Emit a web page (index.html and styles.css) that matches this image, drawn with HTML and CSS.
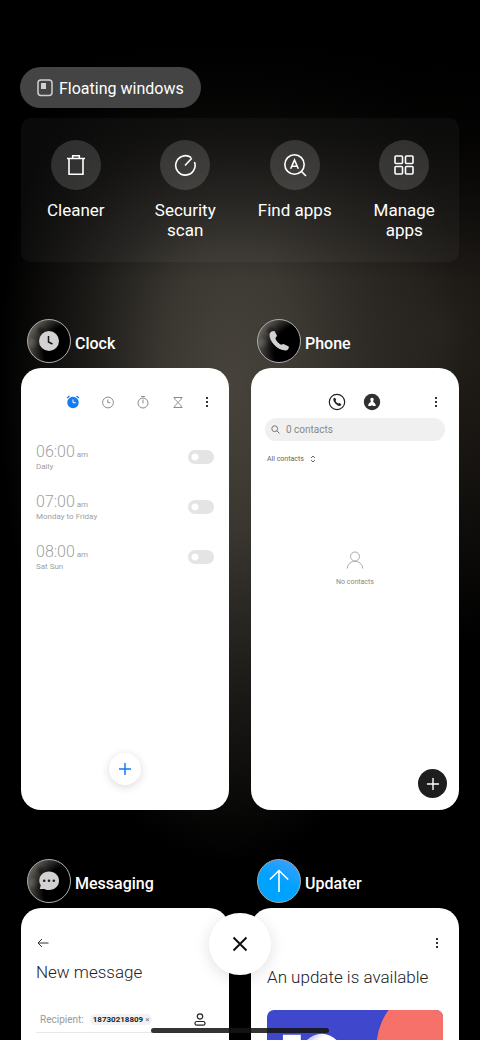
FILE: index.html
```html
<!DOCTYPE html>
<html lang="en">
<head>
<meta charset="utf-8">
<meta name="viewport" content="width=device-width, initial-scale=1">
<title>Recent apps</title>
<link rel="stylesheet" href="styles.css">
</head>
<body>
<main class="recents">
  <button class="pill" type="button">
    <svg width="16" height="18" viewBox="0 0 16 18"><rect x="1" y="1" width="14" height="15.500" rx="3" fill="none" stroke="#d0d0d0" stroke-width="1.500"/><rect x="4" y="4" width="5" height="6" fill="#d0d0d0"/></svg>
    <span class="pill-label">Floating windows</span>
  </button>

  <nav class="tools" aria-label="Tools">
    <button class="tool" type="button">
      <span class="tool-icon"><svg width="24" height="24" viewBox="0 0 24 24"><path d="M3 5.500h18M8.700 5V2.800h6.600V5M5 6v15.200h14V6"/></svg></span>
      Cleaner
    </button>
    <button class="tool" type="button">
      <span class="tool-icon"><svg width="24" height="24" viewBox="0 0 24 24"><path d="M18.200 4.600A9.700 9.700 0 1 0 21.500 9M12 12.500l6.800-7.300"/></svg></span>
      Security scan
    </button>
    <button class="tool" type="button">
      <span class="tool-icon"><svg width="24" height="24" viewBox="0 0 24 24"><circle cx="11.500" cy="11.500" r="9.700"/><path d="M18.500 18.500l4.500 4.500M7.700 15.700l3.800-8.700 3.800 8.700M9 13.300h5"/></svg></span>
      Find apps
    </button>
    <button class="tool" type="button">
      <span class="tool-icon"><svg width="24" height="24" viewBox="0 0 24 24"><rect x="3" y="3" width="7.500" height="7.500" rx="1"/><rect x="13.500" y="3" width="7.500" height="7.500" rx="1"/><rect x="3" y="13.500" width="7.500" height="7.500" rx="1"/><rect x="13.500" y="13.500" width="7.500" height="7.500" rx="1"/></svg></span>
      Manage apps
    </button>
  </nav>

  <div class="apps">
    <section class="app">
      <h2 class="app-title">
        <span class="app-icon moon"><svg width="20" height="20" viewBox="0 0 20 20"><circle cx="10" cy="10" r="10" fill="#d2d2d2"/><path d="M9.500 5v6l4 2" fill="none" stroke="#151515" stroke-width="1.500"/></svg></span>
        <span class="app-name">Clock</span>
      </h2>
      <article class="card">
        <div class="clock-bar">
          <button class="icon-btn" type="button" aria-label="Alarms"><svg width="14" height="14" viewBox="0 0 14 14"><circle cx="7" cy="7.500" r="5.700" fill="#147bf5"/><path d="M1 3l2.500-2M13 3l-2.500-2" stroke="#147bf5" stroke-width="1.300"/><path d="M7 4.500v3.200h2.800" fill="none" stroke="#fff"/></svg></button>
          <button class="icon-btn" type="button" aria-label="World clock"><svg width="14" height="14" viewBox="0 0 14 14" fill="none" stroke="#8b8b8b"><circle cx="7" cy="7.500" r="5.400"/><path d="M6.800 4.500v3.200h2.500"/></svg></button>
          <button class="icon-btn" type="button" aria-label="Stopwatch"><svg width="14" height="14" viewBox="0 0 14 14" fill="none" stroke="#8b8b8b"><circle cx="7" cy="8" r="5"/><path d="M5.200 1.500h3.600M7 4.500v4"/></svg></button>
          <button class="icon-btn" type="button" aria-label="Timer"><svg width="14" height="14" viewBox="0 0 14 14" fill="none" stroke="#8b8b8b"><path d="M2.500 2.500h9M2.500 12.500h9M3.500 2.500c0 3 3.500 4 3.500 5s-3.500 2-3.500 5M10.500 2.500c0 3-3.500 4-3.500 5s3.500 2 3.500 5"/></svg></button>
          <button class="icon-btn more" type="button" aria-label="More"><svg width="4" height="10" viewBox="0 0 4 10"><path d="M1 0h2v2H1zM1 4h2v2H1zM1 8h2v2H1z" fill="#333"/></svg></button>
        </div>
        <ul class="alarms">
          <li class="alarm"><label for="a1"><span class="time">06:00 <small>am</small></span><span class="days">Daily</span></label><input class="switch" id="a1" type="checkbox"></li>
          <li class="alarm"><label for="a2"><span class="time">07:00 <small>am</small></span><span class="days">Monday to Friday</span></label><input class="switch" id="a2" type="checkbox"></li>
          <li class="alarm"><label for="a3"><span class="time">08:00 <small>am</small></span><span class="days">Sat Sun</span></label><input class="switch" id="a3" type="checkbox"></li>
        </ul>
        <button class="add-alarm" type="button" aria-label="Add alarm"><svg width="14" height="14" viewBox="0 0 14 14"><path d="M7 1v12M1 7h12" stroke="#147bf5" stroke-width="1.500"/></svg></button>
      </article>
    </section>

    <section class="app">
      <h2 class="app-title">
        <span class="app-icon moon"><svg width="22" height="22" viewBox="0 0 22 22"><path d="M4.200 1.200L6.500 1 9 5.800 7.400 8.300C8 11 10.500 13.300 13 14.700L15.500 14l5.300 2.500c.3 1.600-.8 3.700-2.600 4C9.500 20.800 1.300 11.500 1.500 4.500c.2-1.600 1.200-2.700 2.700-3.300z" fill="#d2d2d2"/></svg></span>
        <span class="app-name">Phone</span>
      </h2>
      <article class="card">
        <div class="phone-bar">
          <button class="icon-btn" type="button" aria-label="Recents"><svg width="18" height="18" viewBox="0 0 18 18"><circle cx="9" cy="9" r="7.700" fill="none" stroke="#222" stroke-width="1.200"/><path d="M5.800 5l1.200-.3 1.200 2-.6 1c.5 1.300 1.500 2.200 2.800 2.800l1.100-.5 1.800 1.200c0 1-.8 1.700-1.600 1.700C8.500 12.700 5.200 8.500 5.300 6.200z" fill="#222"/></svg></button>
          <button class="icon-btn" type="button" aria-label="Contacts"><svg width="18" height="18" viewBox="0 0 18 18"><circle cx="9" cy="9" r="8.200" fill="#303030"/><path d="M9 4.700a1.700 1.700 0 0 1 1.700 1.900c0 .8-.4 1.200-.6 1.700.2 1.500 2.700 1.700 2.700 4.700H10l-1-1L8 13H5.200c0-3 2.500-3.200 2.700-4.700-.2-.5-.6-.9-.6-1.700A1.700 1.700 0 0 1 9 4.700z" fill="#fff"/></svg></button>
          <button class="icon-btn more" type="button" aria-label="More"><svg width="4" height="10" viewBox="0 0 4 10"><path d="M1 0h2v2H1zM1 4h2v2H1zM1 8h2v2H1z" fill="#333"/></svg></button>
        </div>
        <label class="search">
          <svg width="9" height="9" viewBox="0 0 9 9" fill="none" stroke="#777"><circle cx="3.700" cy="3.700" r="2.900"/><path d="M5.800 5.800l2.700 2.700"/></svg>
          <input type="text" placeholder="0 contacts" aria-label="Search contacts">
        </label>
        <button class="filter" type="button">All contacts <svg width="6" height="8" viewBox="0 0 6 8" fill="none" stroke="#666"><path d="M1 3l2-2 2 2M1 5l2 2 2-2"/></svg></button>
        <div class="empty">
          <svg width="18" height="18" viewBox="0 0 18 18" fill="none" stroke="#aaa"><circle cx="9" cy="5.500" r="4.500"/><path d="M1.200 17.500c1-9.500 14.600-9.500 15.600 0"/></svg>
          No contacts
        </div>
        <button class="add-contact" type="button" aria-label="Add contact"><svg width="12" height="12" viewBox="0 0 12 12"><path d="M6 0v12M0 6h12" stroke="#fff" stroke-width="1.400"/></svg></button>
      </article>
    </section>

    <section class="app">
      <h2 class="app-title">
        <span class="app-icon moon"><svg width="20" height="20" viewBox="0 0 20 20"><path d="M10 .5c5.800 0 10 4 10 9.200s-4.200 9.300-10 9.300c-1.800 0-3 0-4.500-1H.8l1-4C.8 13 .3 11.500.3 9.700.3 4.500 4.300.5 10 .5z" fill="#d2d2d2"/><g fill="#222"><circle cx="5.200" cy="9.800" r="1.300"/><circle cx="10" cy="9.800" r="1.300"/><circle cx="14.800" cy="9.800" r="1.300"/></g></svg></span>
        <span class="app-name">Messaging</span>
      </h2>
      <article class="card message">
        <button class="icon-btn back" type="button" aria-label="Back"><svg width="12" height="10" viewBox="0 0 12 10" fill="none" stroke="#333"><path d="M11.500 5H1M5 1L1 5l4 4"/></svg></button>
        <h3 class="heading">New message</h3>
        <div class="recipient">
          <span class="recipient-label">Recipient:</span>
          <span class="chip">18730218809 <button type="button" aria-label="Remove">×</button></span>
          <button class="icon-btn choose" type="button" aria-label="Choose contact"><svg width="12" height="13" viewBox="0 0 12 13" fill="none" stroke="#222" stroke-width="1.200"><circle cx="6" cy="3.500" r="2.700"/><rect x="1" y="8.500" width="10" height="3.700" rx="1.800"/></svg></button>
        </div>
      </article>
    </section>

    <section class="app">
      <h2 class="app-title">
        <span class="app-icon blue"><svg width="20" height="24" viewBox="0 0 20 24" fill="none" stroke="#fff" stroke-width="1.600"><path d="M10 1.500V23M.8 10.500L10 1.500l9.200 9"/></svg></span>
        <span class="app-name">Updater</span>
      </h2>
      <article class="card updater">
        <button class="icon-btn more" type="button" aria-label="More"><svg width="4" height="10" viewBox="0 0 4 10"><path d="M1 0h2v2H1zM1 4h2v2H1zM1 8h2v2H1z" fill="#333"/></svg></button>
        <h3 class="heading">An update is available</h3>
        <svg class="banner" viewBox="0 0 177 120" aria-hidden="true"><defs><linearGradient id="zero" x1="0" x2="1" y2="1"><stop offset="0" stop-color="#8f94f0"/><stop offset=".3" stop-color="#fff"/></linearGradient></defs><path fill="#3f48cc" d="M0 0h177v120H0z"/><circle cx="175" cy="38" r="65" fill="#f6716a"/><path fill="#fff" d="M16 25h18v70H16z"/><circle cx="55" cy="45" r="21" fill="url(#zero)"/></svg>
      </article>
    </section>
  </div>
</main>
<button class="close-all" type="button" aria-label="Close all"><svg width="16" height="16" viewBox="0 0 16 16"><path d="M1.500 1.500l13 13M14.500 1.500l-13 13" stroke="#111" stroke-width="2"/></svg></button>
<div class="home-bar"></div>
</body>
</html>
```
FILE: styles.css
```css
* { box-sizing: border-box; }
html { height: 100%; background: #000; }
body {
  margin: 0;
  height: 100vh;
  overflow: hidden;
  position: relative;
  color: #fff;
  font-family: Roboto, "Liberation Sans", sans-serif;
  font-size: 17px;
  background:
    linear-gradient(#000 4%, #000b 13%, #0005 20%, transparent 27%),
    radial-gradient(ellipse 48% 46% at 48% 37%, #47433c 0%, #47433cd0 30%, #47433c60 65%, transparent 100%),
    radial-gradient(ellipse 50% 30% at 92% 32%, #24201b 0%, #24201b90 50%, transparent 100%),
    #000;
}
button { border: 0; padding: 0; margin: 0; background: none; color: inherit; font: inherit; cursor: pointer; }
svg { display: block; flex: none; }
h2, h3, ul { margin: 0; padding: 0; font-weight: 400; list-style: none; }

.recents { height: 100%; overflow: hidden; padding: 67px 21px 0; }
.pill {
  display: flex; align-items: center; gap: 6px;
  height: 41px; padding: 0 17px; margin-left: -1px;
  border-radius: 21px; background: #444; font-size: 16px;
}
.pill-label { padding-top: 2px; }
.tools {
  display: grid; grid-template-columns: repeat(4, 1fr);
  margin-top: 10px; padding: 22px 0; min-height: 144px;
  border-radius: 10px; background: #ffffff0a;
}
.tool {
  display: flex; flex-direction: column; align-items: center; justify-content: flex-start; gap: 10px;
  padding: 0 16px; font-size: 17px; line-height: 20px; text-align: center;
}
.tool-icon {
  display: grid; place-items: center;
  width: 50px; height: 50px; border-radius: 50%; background: #ffffff26;
}
.tool-icon svg { fill: none; stroke: #fff; stroke-width: 1.6px; }

.apps { display: grid; grid-template-columns: 1fr 1fr; column-gap: 22px; row-gap: 49px; margin-top: 57px; }
.app-title { display: flex; align-items: center; gap: 4px; height: 44px; padding-left: 6px; font-size: 16px; font-weight: 500; line-height: 20px; }
.app-name { padding-top: 6px; }
.app-icon { display: grid; place-items: center; width: 44px; height: 44px; border: 1px solid #aaa; border-radius: 50%; }
.moon {
  background:
    radial-gradient(circle at 100% 75%, #000 50%, transparent 95%),
    radial-gradient(circle at 30% 25%, #5e5952 0 2px, transparent 5px),
    radial-gradient(circle at 12% 55%, #a8a39b 0 2px, transparent 6px),
    #817c74;
}
.blue { background: linear-gradient(25deg, #00a2ff 50%, #459fff); }
.card {
  display: flex; flex-direction: column;
  height: 442px; margin-top: 5px;
  border-radius: 20px; background: #fff; color: #222;
}
.icon-btn { display: grid; place-items: center; }

.clock-bar { display: flex; align-items: center; justify-content: flex-end; gap: 21px; padding: 27px 20px 0 0; }
.clock-bar .more { margin-left: -1px; }
.alarms { display: grid; gap: 20px; padding: 33px 15px 0; }
.alarm { display: flex; align-items: center; justify-content: space-between; height: 30px; color: #a0a0a0; }
.time, .days { display: block; }
.time { font-size: 16px; font-weight: 300; line-height: 16px; }
.time small { font-size: 8px; font-weight: 400; margin-left: -2px; }
.days { font-size: 8px; line-height: 8px; }
.switch {
  appearance: none; margin: 0; width: 26px; height: 14px; border-radius: 7px;
  background: radial-gradient(circle at 7px 50%, #fff 3px, #e4e4e4 4px);
}
.add-alarm {
  display: grid; place-items: center; align-self: center;
  width: 32px; height: 32px; margin: auto 0 25px;
  border-radius: 50%; background: #fff; box-shadow: 0 2px 10px #00000026;
}

.phone-bar { display: grid; grid-template-columns: 1fr 18px 18px 1fr; column-gap: 17px; align-items: center; padding: 25px 21px 0 19px; }
.phone-bar .icon-btn:first-child { grid-column: 2; }
.phone-bar .more { justify-self: end; }
.search {
  display: flex; align-items: center; gap: 6px;
  height: 23px; margin: 7px 14px 0; padding: 0 6px; border-radius: 12px; background: #f0f0f0;
}
.search input { flex: 1; min-width: 0; padding: 0; border: 0; background: none; font: 10px Roboto, sans-serif; outline: 0; }
.search input::placeholder { color: #888; opacity: 1; }
.filter { display: flex; align-items: center; gap: 6px; margin: 12px 16px 0; font-size: 7px; line-height: 12px; color: #666; }
.empty { display: flex; flex-direction: column; align-items: center; gap: 8px; margin-top: 86px; font-size: 7px; line-height: 10px; color: #888; }
.add-contact {
  display: grid; place-items: center; align-self: flex-end;
  width: 29px; height: 29px; margin: auto 12px 12px; border-radius: 50%; background: #1e1e1e;
}

.heading { font-size: 17px; font-weight: 300; line-height: 22px; }
.message { padding: 30px 15px 0; }
.back { align-self: flex-start; margin-left: 1px; }
.message .heading { margin-top: 13px; }
.recipient {
  display: flex; align-items: center; height: 26px; margin-top: 24px; padding: 0 8px 0 4px;
  border-bottom: 1px solid #e8e8e8;
}
.recipient-label { font-size: 10px; color: #999; }
.chip { display: flex; gap: 2px; margin-left: 6px; padding: 0 3px; border-radius: 6px; background: #f2f2f2; font-size: 8px; font-weight: 700; line-height: 11px; }
.chip button { font-weight: 400; color: #777; }
.choose { margin-left: auto; }
.updater { padding: 30px 16px 0; }
.updater .more { align-self: flex-end; margin-right: 4px; }
.updater .heading { margin-top: 18px; }
.banner { width: 100%; margin-top: 22px; border-radius: 7px; }

.close-all {
  position: absolute; left: 50%; bottom: 65px; margin-left: -31px;
  display: grid; place-items: center;
  width: 62px; height: 62px; border-radius: 50%; background: #fff; box-shadow: 0 3px 16px #0000001f;
}
.home-bar { position: absolute; right: 0; bottom: 7px; left: 0; width: 37%; height: 5px; margin: 0 auto; border-radius: 3px; background: #151515dd; }
```
